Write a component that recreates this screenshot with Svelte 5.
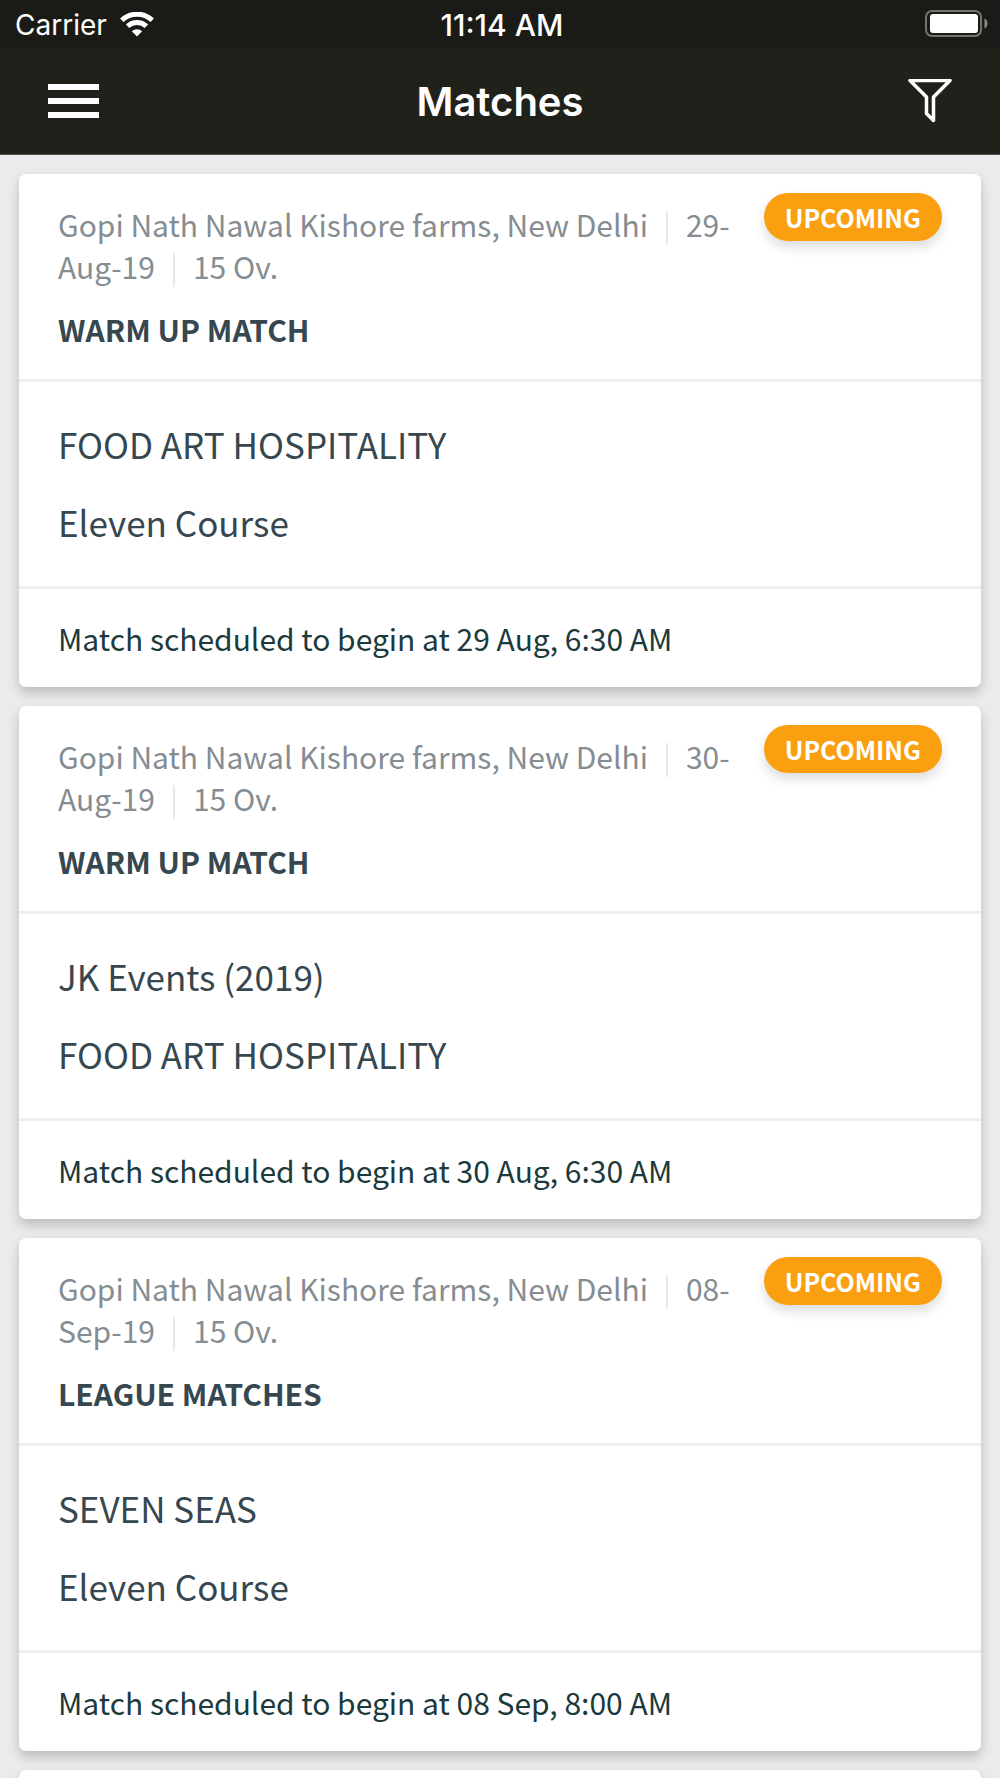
<script>
  const venue = 'Gopi Nath Nawal Kishore farms, New Delhi';

  const matches = [
    {
      date: '29-Aug-19',
      stage: 'WARM UP MATCH',
      teams: ['FOOD ART HOSPITALITY', 'Eleven Course'],
      note: 'Match scheduled to begin at 29 Aug, 6:30 AM',
    },
    {
      date: '30-Aug-19',
      stage: 'WARM UP MATCH',
      teams: ['JK Events (2019)', 'FOOD ART HOSPITALITY'],
      note: 'Match scheduled to begin at 30 Aug, 6:30 AM',
    },
    {
      date: '08-Sep-19',
      stage: 'LEAGUE MATCHES',
      teams: ['SEVEN SEAS', 'Eleven Course'],
      note: 'Match scheduled to begin at 08 Sep, 8:00 AM',
    },
  ];
</script>

<div class="screen">
  <div class="status">
    <div class="carrier">
      <span>Carrier</span>
      <svg width="34" height="25" viewBox="0 0 34 25" aria-hidden="true">
        <g fill="none" stroke="#fff" stroke-width="5">
          <path d="M1.8 8.3a22 22 0 0 1 30.4 0" />
          <path d="M7.6 14.2a13.6 13.6 0 0 1 18.8 0" />
        </g>
        <path d="M17 24.5l-5.2-5.2a7.6 7.6 0 0 1 10.4 0z" fill="#fff" />
      </svg>
    </div>
    <time class="clock">11:14 AM</time>
    <svg class="battery" width="64" height="28" viewBox="0 0 64 28" aria-hidden="true">
      <rect x="1" y="1" width="55" height="25" rx="6" fill="none" stroke="#73746f" stroke-width="2" />
      <rect x="5" y="4" width="48" height="19" rx="3" fill="#fff" />
      <path d="M59.500 8.500c4 1.500 4 8.500 0 10z" fill="#8b8c88" />
    </svg>
  </div>

  <header class="bar">
    <button class="icon" aria-label="Menu">
      <svg width="51" height="36" viewBox="0 0 51 36">
        <path d="M0 4h51M0 18h51M0 32h51" stroke="#fff" stroke-width="6" />
      </svg>
    </button>
    <h1>Matches</h1>
    <button class="icon" aria-label="Filter">
      <svg width="44" height="44" viewBox="0 0 44 44">
        <path
          d="M2 1.500h40L25.500 18V41.500l-7-7V18z"
          fill="none"
          stroke="#fff"
          stroke-width="3.500"
          stroke-linejoin="round"
        />
      </svg>
    </button>
  </header>

  <main class="list">
    {#each matches as match}
      <article class="card">
        <div class="head">
          <div class="info">
            <p class="meta">{venue}<i class="sep"></i>{match.date}<i class="sep"></i>15 Ov.</p>
            <h2>{match.stage}</h2>
          </div>
          <span class="badge">UPCOMING</span>
        </div>
        <div class="teams">
          {#each match.teams as team}
            <p>{team}</p>
          {/each}
        </div>
        <p class="note">{match.note}</p>
      </article>
    {/each}
    <article class="card next" aria-hidden="true"></article>
  </main>
</div>

<style>
  :global(body) {
    margin: 0;
    background: #eaebed;
  }

  .screen {
    display: flex;
    flex-direction: column;
    height: 100vh;
    overflow: hidden;
    background: #eaebed;
    font-family: 'Noto Sans CJK SC', 'Noto Sans', sans-serif;
    color: #36474f;
  }

  p,
  h1,
  h2 {
    margin: 0;
  }

  .status,
  .bar {
    display: grid;
    grid-template-columns: 1fr auto 1fr;
    align-items: center;
    flex-shrink: 0;
    color: #fff;
    font-family: Inter, 'Liberation Sans', sans-serif;
  }

  .status {
    height: 48px;
    padding: 0 11px 0 15px;
    background: #1a1b17;
    font-size: 28px;
    line-height: 46px;
  }

  .carrier {
    display: flex;
    align-items: center;
    gap: 13px;
  }

  .carrier span,
  .clock {
    padding-top: 2px;
  }

  .clock {
    font-size: 30px;
    font-weight: 500;
  }

  .battery {
    justify-self: end;
  }

  .bar {
    box-sizing: border-box;
    height: 107px;
    padding: 0 48px;
    background: #21211c;
    border-bottom: 1px solid #55524f;
  }

  .bar h1 {
    padding-top: 2px;
    font-size: 40px;
    font-weight: 600;
    line-height: 48px;
  }

  .icon {
    display: flex;
    padding: 0;
    border: 0;
    background: none;
  }

  .icon:last-child {
    justify-self: end;
  }

  .list {
    flex: 1;
    min-height: 0;
    display: flex;
    flex-direction: column;
    gap: 19px;
    padding: 19px 19px 0;
    overflow: hidden;
  }

  .card {
    flex-shrink: 0;
    background: #fff;
    border-radius: 7px;
    box-shadow: 0 6px 12px rgba(0, 0, 0, 0.2);
  }

  .next {
    height: 513px;
  }

  .head {
    display: flex;
    align-items: flex-start;
    gap: 16px;
    padding: 19px 39px 28px;
  }

  .info {
    flex: 1;
    min-width: 0;
    padding-top: 10px;
  }

  .meta {
    font-size: 30px;
    line-height: 42px;
    color: #858d92;
  }

  .sep {
    display: inline-block;
    width: 2px;
    height: 34px;
    margin: 0 18px;
    background: #e6e8e9;
    vertical-align: -8px;
  }

  h2 {
    margin-top: 20px;
    font-size: 30px;
    font-weight: 700;
    line-height: 44px;
  }

  .badge {
    padding: 0 21px;
    border-radius: 24px;
    background: #fa9f10;
    box-shadow: 0 6px 12px rgba(0, 0, 0, 0.14);
    color: #fff;
    font-size: 25px;
    font-weight: 700;
    line-height: 48px;
  }

  .teams {
    padding: 23px 39px 25px;
    border: solid #eeeff0;
    border-width: 3px 0;
  }

  .teams p {
    font-size: 35px;
    line-height: 78px;
  }

  .note {
    padding: 24px 39px;
    font-size: 30px;
    line-height: 50px;
    color: #1c3a3c;
  }
</style>
